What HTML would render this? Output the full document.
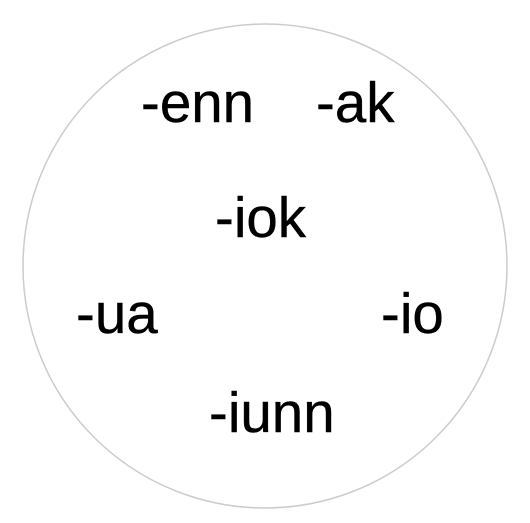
<!DOCTYPE html>
<html><head><style>html,body{margin:0;padding:0;background:#fff;}svg{display:block}</style></head>
<body>
<svg width="530" height="523" xmlns="http://www.w3.org/2000/svg">
<circle cx="265" cy="266" r="242" fill="#fff" stroke="#cccccc" stroke-width="1.5"/>
<g font-family="Liberation Sans, Arial, sans-serif" font-size="56.5" fill="#000" stroke="#000" stroke-width="0.4">
<text x="141" y="122">-enn</text>
<text x="316" y="122">-ak</text>
<text x="215" y="237">-iok</text>
<text x="76" y="333">-ua</text>
<text x="381" y="333">-io</text>
<text x="209" y="432">-iunn</text>
</g>
</svg>
</body></html>
